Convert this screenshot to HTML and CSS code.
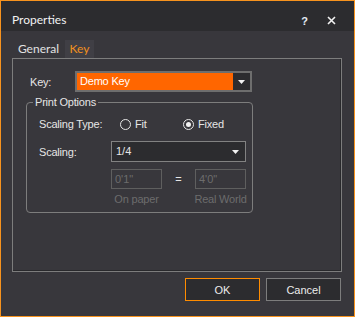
FILE: index.html
```html
<!DOCTYPE html>
<html lang="en">
<head>
    <meta charset="UTF-8">
    <title>Properties</title>
    <link rel="stylesheet" href="styles.css">
</head>
<body>
    <div class="window">
        <!-- Title bar -->
        <div class="titlebar">
            <span class="title">Properties</span>
            <div class="title-buttons">
                <span class="help">?</span>
                <svg class="close" width="9" height="9" viewBox="0 0 9 9">
                    <path d="M1 1 L8 8 M8 1 L1 8" stroke="#f2f2f2" stroke-width="1.6" fill="none"/>
                </svg>
            </div>
        </div>

        <!-- Tabs -->
        <div class="tabs">
            <div class="tab">General</div>
            <div class="tab active">Key</div>
        </div>

        <div class="panel">
            <div class="key-row">
                <label class="label key-label">Key:</label>
                <div class="select select-key">
                    <span class="value">Demo Key</span>
                    <span class="drop">
                        <svg width="7" height="4" viewBox="0 0 7 4"><path d="M0 0 H7 L3.5 4 Z" fill="#f2f2f2"/></svg>
                    </span>
                </div>
            </div>

            <fieldset class="group">
                <legend>Print Options</legend>
                <div class="row row-type">
                    <label class="label">Scaling Type:</label>
                    <span class="radio radio-fit"><span class="circle"></span>Fit</span>
                    <span class="radio"><span class="circle checked"></span>Fixed</span>
                </div>
                <div class="row row-scale">
                    <label class="label">Scaling:</label>
                    <div class="select select-scale">
                        <span class="value">1/4</span>
                        <span class="drop">
                            <svg width="7" height="4" viewBox="0 0 7 4"><path d="M0 0 H7 L3.5 4 Z" fill="#f2f2f2"/></svg>
                        </span>
                    </div>
                </div>
                <div class="row row-inputs">
                    <div class="field">0'1"</div>
                    <span class="equals">=</span>
                    <div class="field">4'0"</div>
                </div>
                <div class="row row-captions">
                    <span class="caption">On paper</span>
                    <span class="caption caption-right">Real World</span>
                </div>
            </fieldset>
        </div>

        <div class="buttons">
            <button class="btn ok">OK</button>
            <button class="btn">Cancel</button>
        </div>
    </div>
</body>
</html>
```

FILE: styles.css
```css
body {
    margin: 0;
    padding: 0;
    background-color: #38373c;
    font-family: "Liberation Sans", Arial, sans-serif;
    font-size: 11px;
    color: #e6e6e6;
}
.window {
    width: 355px;
    height: 317px;
    box-sizing: border-box;
    border: 1px solid #f7931e;
    background-color: #38373c;
    display: flex;
    flex-direction: column;
}
.titlebar {
    height: 30px;
    box-sizing: border-box;
    padding: 12px 0 0 11px;
    background-color: #2c2c2f;
    display: flex;
    justify-content: space-between;
    font-family: Lato, "Open Sans", sans-serif;
    font-size: 12px;
    line-height: 14px;
    color: #f2f2f2;
}
.title-buttons {
    display: flex;
    align-items: flex-start;
}
.help {
    font-family: "Liberation Sans", Arial, sans-serif;
    font-weight: bold;
    font-size: 11px;
    color: #e4ecf7;
    margin-top: 1px;
}
.close {
    margin: 3px 18px 0 19px;
}
.tabs {
    display: flex;
    margin: 9px 0 0 11px;
    height: 18px;
    font-family: Lato, "Open Sans", sans-serif;
    font-size: 12px;
    line-height: 18px;
}
.tab {
    width: 53px;
    text-align: center;
    color: #e2e2e2;
}
.tab.active {
    width: 29px;
    background-color: #403f45;
    color: #f0901e;
}
.panel {
    margin-left: 11px;
    width: 330px;
    height: 214px;
    box-sizing: border-box;
    border: 1px solid #7d7d7d;
    box-shadow: inset -1px -1px 0 #29292c;
    padding-top: 12px;
}
.key-row {
    display: flex;
    align-items: center;
    height: 21px;
    padding-left: 17px;
}
.label {
    display: inline-block;
    letter-spacing: -0.2px;
}
.key-label {
    width: 45px;
}
.select {
    display: flex;
    box-sizing: border-box;
    height: 21px;
}
.select-key {
    width: 177px;
    border: 2px solid #6e6e6e;
}
.select-key .value {
    flex: 1;
    background-color: #ff6600;
    color: #ffffff;
    padding-left: 3px;
    line-height: 17px;
    letter-spacing: -0.2px;
}
.drop {
    width: 17px;
    display: flex;
    align-items: center;
    justify-content: center;
    background-color: #2c2c2f;
}
.group {
    margin: 4px 0 0 13px;
    width: 227px;
    box-sizing: border-box;
    border: 1px solid #7d7d7d;
    border-radius: 4px;
    padding: 0 0 4px 12px;
    min-width: 0;
}
.group legend {
    margin-left: -6px;
    padding: 0 2px;
    line-height: 13px;
    letter-spacing: -0.2px;
}
.row {
    display: flex;
    align-items: center;
}
.row .label {
    width: 72px;
}
.row-type {
    margin-top: 5px;
    height: 20px;
}
.radio {
    display: inline-flex;
    align-items: center;
    letter-spacing: -0.2px;
}
.radio-fit {
    margin-left: 9px;
    width: 63px;
}
.circle {
    width: 11px;
    height: 11px;
    box-sizing: border-box;
    border: 1px solid #e6e6e6;
    border-radius: 50%;
    margin-right: 4px;
    display: flex;
    align-items: center;
    justify-content: center;
}
.circle.checked::after {
    content: "";
    width: 5px;
    height: 5px;
    border-radius: 50%;
    background-color: #f2f2f2;
}
.row-scale {
    margin-top: 7px;
    height: 21px;
}
.select-scale {
    width: 135px;
    border: 1px solid #828282;
    background-color: #2c2c2f;
}
.select-scale .value {
    flex: 1;
    padding-left: 4px;
    line-height: 19px;
}
.select-scale .drop {
    width: 19px;
}
.row-inputs {
    margin: 7px 0 0 72px;
    height: 20px;
}
.field {
    width: 51px;
    height: 20px;
    box-sizing: border-box;
    border: 1px solid #5f5f5f;
    color: #6c6c6c;
    padding-left: 3px;
    line-height: 18px;
}
.equals {
    width: 33px;
    text-align: center;
    color: #e6e6e6;
}
.row-captions {
    margin: 1px 0 0 72px;
    height: 18px;
    color: #6c6c6c;
}
.caption {
    width: 51px;
    display: flex;
    justify-content: center;
    white-space: nowrap;
    letter-spacing: -0.2px;
}
.caption-right {
    margin-left: 33px;
}
.buttons {
    display: flex;
    justify-content: flex-end;
    gap: 6px;
    margin-top: 6px;
    padding-right: 13px;
}
.btn {
    width: 75px;
    height: 23px;
    box-sizing: border-box;
    border: 1px solid #7d7d7d;
    background-color: #2c2c2f;
    color: #ececec;
    font-family: "Liberation Sans", Arial, sans-serif;
    font-size: 11px;
    padding: 0;
}
.btn.ok {
    border-color: #ff8c00;
}
```
